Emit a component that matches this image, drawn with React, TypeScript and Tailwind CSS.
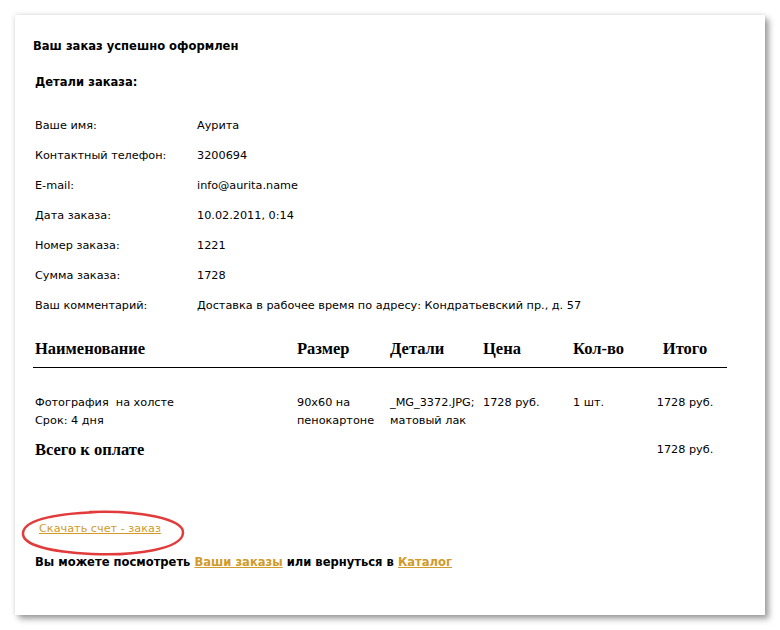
import React from "react"

const details = [
  ["Ваше имя:", "Аурита"],
  ["Контактный телефон:", "3200694"],
  ["E-mail:", "info@aurita.name"],
  ["Дата заказа:", "10.02.2011, 0:14"],
  ["Номер заказа:", "1221"],
  ["Сумма заказа:", "1728"],
  ["Ваш комментарий:", "Доставка в рабочее время по адресу: Кондратьевский пр., д. 57"],
]

const sans = "font-['DejaVu_Sans',Verdana,sans-serif]"
const serif = "font-['Liberation_Serif','Times_New_Roman',serif]"

const App = () => {
  return (
    <div className={`h-[630px] w-[780px] bg-white pl-[15px] pt-[15px] text-[11.25px] text-black ${sans}`}>
      <div className="h-[600px] w-[750px] bg-white pl-[18px] pt-[22px] shadow-[4px_4px_6px_rgba(0,0,0,0.35),0_0_5px_rgba(0,0,0,0.15)]">
        <div className="flex h-[20px] items-center text-[11.55px] font-bold">Ваш заказ успешно оформлен</div>
        <div className="mt-[16px] flex h-[20px] items-center pl-[2px] text-[11.55px] font-bold">Детали заказа:</div>

        <div className="mt-[18px] flex flex-col pl-[2px]">
          {details.map(([label, value]) => (
            <div key={label} className="flex h-[30px] items-center">
              <span className="w-[162px]">{label}</span>
              <span>{value}</span>
            </div>
          ))}
        </div>

        <div className="mt-[10px] w-[694px]">
          <div className={`flex h-[37px] items-center border-b border-black pl-[2px] text-[16.5px] font-bold ${serif}`}>
            <span className="w-[262px]">Наименование</span>
            <span className="w-[93px]">Размер</span>
            <span className="w-[93px]">Детали</span>
            <span className="w-[90px]">Цена</span>
            <span className="w-[70px]">Кол-во</span>
            <span className="flex-1 text-center">Итого</span>
          </div>

          <div className="mt-[26px] flex pl-[2px] leading-[18px]">
            <div className="w-[262px]">
              <div>Фотография&nbsp; на холсте</div>
              <div>Срок: 4 дня</div>
            </div>
            <div className="w-[93px]">
              <div>90x60 на</div>
              <div>пенокартоне</div>
            </div>
            <div className="w-[93px]">
              <div>_MG_3372.JPG;</div>
              <div>матовый лак</div>
            </div>
            <div className="w-[90px]">1728 руб.</div>
            <div className="w-[70px]">1 шт.</div>
            <div className="flex-1 text-center">1728 руб.</div>
          </div>

          <div className="mt-[9px] flex h-[22px] items-center pl-[2px]">
            <span className={`w-[608px] text-[16.5px] font-bold ${serif}`}>Всего к оплате</span>
            <span className="flex-1 text-center">1728 руб.</span>
          </div>
        </div>

        <div className="relative mt-[58px] flex h-[20px] items-center pl-[6px]">
          <svg className="absolute left-[-13px] top-[-10px]" width="166" height="48" viewBox="0 0 166 48">
            <path
              d="M70 3 C120 1 164 10 163 24 C162 40 115 47 72 45 C30 43 2 36 3 24 C4 12 30 5 78 3"
              fill="none"
              stroke="#e23b3b"
              strokeWidth="2.5"
              strokeLinecap="round"
            />
          </svg>
          <a href="#" className="relative text-[#d19a2a] underline">Скачать счет - заказ</a>
        </div>

        <div className="mt-[14px] flex h-[20px] items-center pl-[2px] text-[11.55px] font-bold">
          Вы можете посмотреть&nbsp;<a href="#" className="text-[#d19a2a] underline">Ваши заказы</a>&nbsp;или вернуться в&nbsp;<a href="#" className="text-[#d19a2a] underline">Каталог</a>
        </div>
      </div>
    </div>
  )
}

export default App
